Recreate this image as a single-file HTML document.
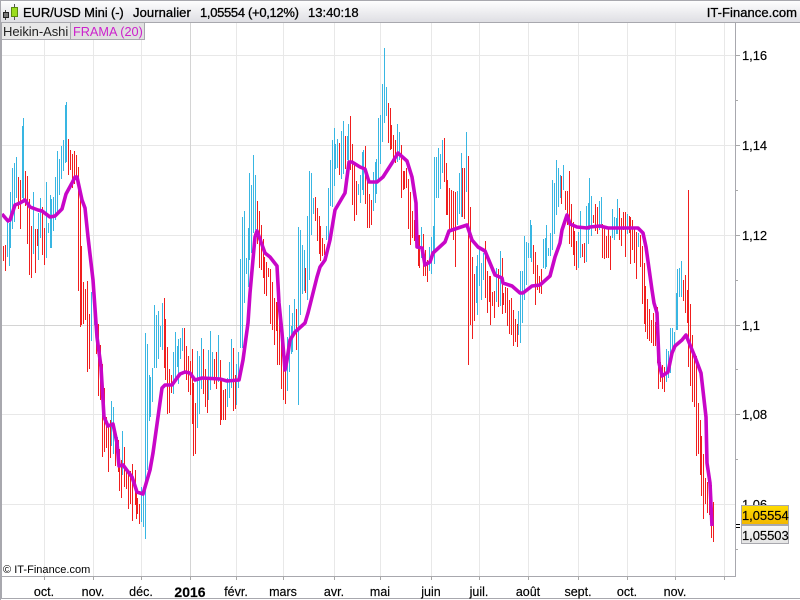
<!DOCTYPE html>
<html><head><meta charset="utf-8">
<style>
html,body{margin:0;padding:0;background:#fff}
#r{position:relative;width:800px;height:600px;overflow:hidden;background:#fff;font-family:"Liberation Sans",sans-serif;font-size:12px;color:#000}
.t{position:absolute;white-space:nowrap;line-height:16px}
.b{-webkit-text-stroke:.3px #000}
.m{position:absolute;top:584px;width:60px;margin-left:-30px;text-align:center;font-size:12.5px;line-height:16px;-webkit-text-stroke:.15px #000}
.p{position:absolute;left:742px;font-size:13px;line-height:16px;letter-spacing:-.05px;-webkit-text-stroke:.15px #000}
</style></head><body><div id="r">
<svg width="800" height="600" style="position:absolute;left:0;top:0">
<defs><linearGradient id="g" x1="0" y1="0" x2="0" y2="1"><stop offset="0" stop-color="#fff"/><stop offset="1" stop-color="#dfdfe4"/></linearGradient>
<linearGradient id="y" x1="0" y1="0" x2="0" y2="1"><stop offset="0" stop-color="#ffdc00"/><stop offset="1" stop-color="#f2b600"/></linearGradient>
<linearGradient id="s" x1="0" y1="0" x2="0" y2="1"><stop offset="0" stop-color="#f8f8f8"/><stop offset="1" stop-color="#e4e4e4"/></linearGradient></defs>
<g shape-rendering="crispEdges">
<path stroke="#e8e8e8" fill="none" d="M44.5 23V576M93.5 23V576M141.5 23V576M236.5 23V576M283.5 23V576M334.5 23V576M380.5 23V576M431.5 23V576M479.5 23V576M528.5 23V576M578.5 23V576M627.5 23V576M675.5 23V576M724.5 23V576M2 55.5H735M2 145.5H735M2 235.5H735M2 414.5H735M2 504.5H735"/>
<path stroke="#d4d4d4" fill="none" d="M190.5 23V576M2 325.5H735"/>
<path stroke="#f01e1e" fill="none" d="M3.5 246V261M5.5 245V271M18.5 177V209M20.5 180V229M25.5 171V206M27.5 176V244M29.5 199V275M31.5 226V278M35.5 229V273M37.5 229V246M42.5 207V255M44.5 228V265M68.5 139V175M70.5 150V170M72.5 154V188M74.5 151V184M76.5 155V176M78.5 167V291M80.5 190V327M81.5 246V325M83.5 282V324M85.5 289V320M87.5 281V372M89.5 314V369M96.5 325V354M98.5 324V396M100.5 345V400M102.5 364V457M104.5 388V452M106.5 417V448M108.5 427V472M110.5 420V458M115.5 430V466M118.5 440V472M119.5 449V491M121.5 460V498M124.5 447V487M126.5 469V489M128.5 472V509M130.5 471V504M132.5 464V521M135.5 470V505M136.5 492V519M137.5 498V514M139.5 504V524M164.5 298V368M165.5 319V380M167.5 347V414M169.5 369V413M171.5 375V393M184.5 328V373M186.5 346V380M188.5 356V392M190.5 361V395M192.5 349V424M193.5 383V456M195.5 403V454M203.5 349V394M205.5 369V407M207.5 377V413M214.5 359V384M216.5 352V389M220.5 360V425M221.5 380V420M223.5 390V420M225.5 389V420M233.5 348V411M235.5 375V409M257.5 201V244M259.5 211V268M261.5 225V270M263.5 239V278M264.5 257V294M266.5 262V296M268.5 268V277M270.5 269V324M272.5 282V330M274.5 298V345M276.5 302V331M277.5 302V365M279.5 302V365M281.5 340V389M283.5 360V400M285.5 365V404M296.5 309V350M305.5 268V293M315.5 197V221M317.5 208V241M319.5 216V254M320.5 226V261M322.5 238V256M324.5 244V255M339.5 143V175M345.5 136V169M350.5 116V170M352.5 144V205M354.5 163V221M356.5 181V215M365.5 146V204M367.5 181V228M369.5 194V228M371.5 200V225M388.5 103V143M390.5 108V150M391.5 125V149M393.5 135V158M395.5 140V163M401.5 145V198M403.5 171V190M404.5 171V189M406.5 168V188M408.5 179V229M410.5 192V245M412.5 211V238M414.5 220V241M416.5 204V241M418.5 235V266M419.5 235V268M423.5 234V276M425.5 250V276M427.5 260V282M444.5 138V182M446.5 163V215M447.5 180V215M449.5 188V231M451.5 190V229M453.5 191V240M455.5 192V267M462.5 168V217M464.5 168V219M468.5 156V365M470.5 207V325M472.5 257V339M474.5 274V321M485.5 241V298M487.5 271V313M489.5 276V302M490.5 276V325M492.5 292V306M494.5 291V318M498.5 269V307M502.5 258V314M503.5 293V305M505.5 287V313M507.5 288V326M509.5 300V334M511.5 298V335M513.5 310V346M515.5 319V342M517.5 324V347M533.5 245V274M535.5 252V305M537.5 265V290M539.5 276V293M541.5 269V294M561.5 176V204M565.5 191V210M567.5 191V225M569.5 171V244M571.5 204V247M573.5 222V255M574.5 231V266M576.5 241V270M582.5 244V257M584.5 243V263M593.5 215V223M595.5 204V231M597.5 207V234M602.5 224V258M604.5 226V259M606.5 236V258M608.5 229V258M610.5 236V270M619.5 208V240M621.5 218V246M623.5 212V230M625.5 212V257M629.5 216V233M630.5 217V264M632.5 220V250M634.5 228V263M636.5 232V279M640.5 235V267M642.5 246V304M644.5 263V324M645.5 286V332M647.5 299V339M649.5 309V341M651.5 320V343M653.5 313V346M655.5 322V346M657.5 307V363M658.5 352V389M660.5 362V382M662.5 365V389M664.5 367V392M683.5 280V301M685.5 275V313M687.5 290V323M688.5 190V367M690.5 304V386M692.5 335V402M694.5 354V407M696.5 356V456M698.5 403V454M700.5 420V475M701.5 436V496M703.5 454V519M705.5 478V504M707.5 482V513M709.5 484V515M711.5 485V538M713.5 502V542"/>
<path stroke="#38b6e2" fill="none" d="M7.5 222V257M9.5 223V266M10.5 192V248M12.5 168V229M14.5 163V222M16.5 157V198M22.5 126V198M23.5 118V203M33.5 192V254M38.5 213V260M40.5 198V238M46.5 182V258M48.5 223V233M50.5 195V248M51.5 199V248M53.5 197V231M55.5 177V220M57.5 151V212M59.5 159V195M61.5 146V179M63.5 140V171M65.5 105V163M66.5 102V162M91.5 292V341M94.5 293V325M111.5 401V446M113.5 407V454M117.5 437V463M122.5 431V475M141.5 487V522M143.5 492V527M145.5 333V539M147.5 344V470M149.5 375V421M150.5 377V417M152.5 368V402M154.5 305V368M156.5 315V368M158.5 311V359M160.5 326V347M162.5 303V350M173.5 352V394M175.5 332V378M177.5 346V367M178.5 339V384M180.5 338V359M182.5 328V351M197.5 351V428M199.5 356V414M201.5 338V389M208.5 350V400M210.5 331V390M212.5 352V380M218.5 335V382M227.5 378V407M229.5 362V398M231.5 339V388M236.5 364V405M238.5 352V388M240.5 259V348M242.5 217V348M244.5 211V303M246.5 258V274M248.5 228V287M249.5 173V260M251.5 185V253M253.5 155V233M255.5 175V230M287.5 337V391M289.5 305V372M291.5 326V354M292.5 313V352M294.5 299V330M298.5 227V405M300.5 230V315M302.5 245V294M304.5 250V291M307.5 216V300M309.5 171V280M311.5 173V235M313.5 198V214M326.5 226V240M328.5 188V240M330.5 160V206M332.5 140V207M334.5 128V186M335.5 144V169M337.5 139V168M341.5 131V179M343.5 121V174M347.5 136V160M348.5 124V170M358.5 184V195M360.5 175V203M362.5 152V190M363.5 150V195M373.5 172V211M375.5 162V203M376.5 159V194M378.5 118V181M380.5 115V164M382.5 84V142M384.5 48V123M386.5 87V116M397.5 124V162M399.5 132V160M421.5 227V258M429.5 247V271M431.5 237V274M433.5 226V256M434.5 157V264M436.5 157V198M438.5 148V198M440.5 154V189M442.5 140V173M457.5 191V225M459.5 173V214M461.5 153V217M466.5 132V192M476.5 266V303M477.5 255V315M479.5 248V286M481.5 263V300M483.5 253V280M496.5 268V302M500.5 251V306M518.5 311V335M520.5 271V343M522.5 271V323M524.5 236V300M526.5 242V285M528.5 243V258M530.5 220V258M531.5 225V262M543.5 239V268M545.5 238V269M546.5 225V267M548.5 248V256M550.5 233V256M552.5 180V250M554.5 183V234M556.5 160V215M558.5 168V207M560.5 175V198M563.5 165V190M578.5 232V268M580.5 211V258M586.5 206V262M588.5 203V244M589.5 178V230M591.5 196V236M599.5 201V230M601.5 197V226M612.5 209V238M614.5 217V240M616.5 218V234M617.5 199V234M627.5 214V234M638.5 233V247M666.5 349V382M668.5 351V378M670.5 328V373M672.5 328V357M674.5 332V350M676.5 293V330M677.5 269V330M679.5 268V297M681.5 261V297"/>
</g>
<path fill="none" stroke="#c806c8" stroke-width="3.6" stroke-linejoin="round" d="M2 214L8 221L10 220L15 205L20 203L25 200L30 207L38 210L42 211L50 217L55 216L62 209L66 194L72 183L75 177L77 177L82 200L85 208L88 237L93 280L97 337L101 367L104 417L108 426L113 424L117 443L119 466L123 465L132 477L137 492L143 494L150 470L153 453L158 417L162 388L165 385L172 385L177 378L180 374L185 372L190 373L195 380L202 378L220 379L227 381L239 380L243 360L248 323L250 293L255 237L257 231L265 253L270 257L277 266L279 303L282 333L285 370L287 360L290 340L295 332L305 323L308 313L317 277L320 267L325 260L330 240L335 210L345 193L349 162L352 162L360 167L365 169L369 182L377 182L383 177L392 163L398 153L407 161L412 177L416 203L417 247L422 248L425 265L430 262L433 253L445 242L449 231L467 225L472 240L478 247L485 251L490 263L495 275L502 278L503 283L512 286L520 293L523 293L532 286L540 285L550 276L555 257L560 243L562 230L567 215L570 224L577 227L587 228L590 227L600 226L608 228L617 228L638 228L643 233L646 247L652 290L654 303L657 313L659 363L662 376L668 372L672 353L675 346L682 340L686 335L688 340L695 357L701 373L706 417L707 463L710 483L712 526"/>
<g shape-rendering="crispEdges">
<rect x="0" y="0" width="800" height="22" fill="url(#g)"/>
<path stroke="#a8a8ae" fill="none" d="M0 .5H800M0 22.5H800M.5 0V600M1.5 23V599M0 598.5H800M735.5 23V577M2 576.5H736"/>
<path stroke="#a8a8a8" fill="none" d="M44.5 576V580M93.5 576V580M141.5 576V580M190.5 576V580M236.5 576V580M283.5 576V580M334.5 576V580M380.5 576V580M431.5 576V580M479.5 576V580M528.5 576V580M578.5 576V580M627.5 576V580M675.5 576V580M724.5 576V580M736 55.5H740M736 145.5H740M736 235.5H740M736 325.5H740M736 414.5H740M736 100.5H738M736 190.5H738M736 280.5H738M736 369.5H738M736 459.5H738M736 549.5H738"/>
<rect x="2" y="23" width="68" height="16" fill="#e8e8e8"/>
<rect x="71" y="23" width="73" height="16" fill="#e0e0e0"/>
<path stroke="#a8a8ae" fill="none" d="M0 39.5H145M70.5 23V39M144.5 23V39"/>
<path stroke="#000" fill="none" d="M736 524.5H740M736 527.5H740"/>
<!-- icon -->
<path stroke="#444" fill="none" d="M5.5 10V20"/>
<rect x="3.5" y="12.5" width="5" height="5" fill="#777" stroke="#222"/>
<path stroke="#555" fill="none" d="M14.5 4V20"/>
<rect x="11.5" y="7.5" width="6" height="9" fill="#9bdc1e" stroke="#5a8a10"/>
<rect x="741.5" y="505.5" width="47" height="19" fill="url(#y)" stroke="#a8a8ae"/>
<rect x="741.5" y="525.5" width="47" height="18" fill="url(#s)" stroke="#a8a8ae"/>
</g>
</svg>
<div class="t b" style="left:23px;top:5px;font-size:13px;letter-spacing:-.12px">EUR/USD Mini (-)</div>
<div class="t b" style="left:133px;top:5px;font-size:13px;letter-spacing:.08px">Journalier</div>
<div class="t b" style="left:200px;top:5px;font-size:13px;letter-spacing:-.32px">1,05554 (+0,12%)</div>
<div class="t b" style="left:308px;top:5px;font-size:13px">13:40:18</div>
<div class="t b" style="right:3px;top:5px;font-size:13px;letter-spacing:.05px">IT-Finance.com</div>
<div class="t" style="left:3px;top:24px;font-size:13px;letter-spacing:-.05px;color:#222">Heikin-Ashi</div>
<div class="t" style="left:73px;top:24px;font-size:12.7px;color:#cc22cc">FRAMA (20)</div>
<div class="p" style="top:48px">1,16</div>
<div class="p" style="top:138px">1,14</div>
<div class="p" style="top:228px">1,12</div>
<div class="p" style="top:318px">1,1</div>
<div class="p" style="top:407px">1,08</div>
<div class="p" style="top:497px;height:8px;overflow:hidden">1,06</div>
<div class="p" style="top:508px">1,05554</div>
<div class="p" style="top:528px">1,05503</div>
<div class="t" style="left:3px;top:562px;font-size:11px;letter-spacing:.02px">© IT-Finance.com</div>
<div class="m" style="left:44px">oct.</div>
<div class="m" style="left:93px">nov.</div>
<div class="m" style="left:141px">déc.</div>
<div class="m" style="left:190px;font-weight:bold;font-size:14px">2016</div>
<div class="m" style="left:236px">févr.</div>
<div class="m" style="left:283px">mars</div>
<div class="m" style="left:334px">avr.</div>
<div class="m" style="left:380px">mai</div>
<div class="m" style="left:431px">juin</div>
<div class="m" style="left:479px">juil.</div>
<div class="m" style="left:528px">août</div>
<div class="m" style="left:578px">sept.</div>
<div class="m" style="left:627px">oct.</div>
<div class="m" style="left:675px">nov.</div>
</div></body></html>
